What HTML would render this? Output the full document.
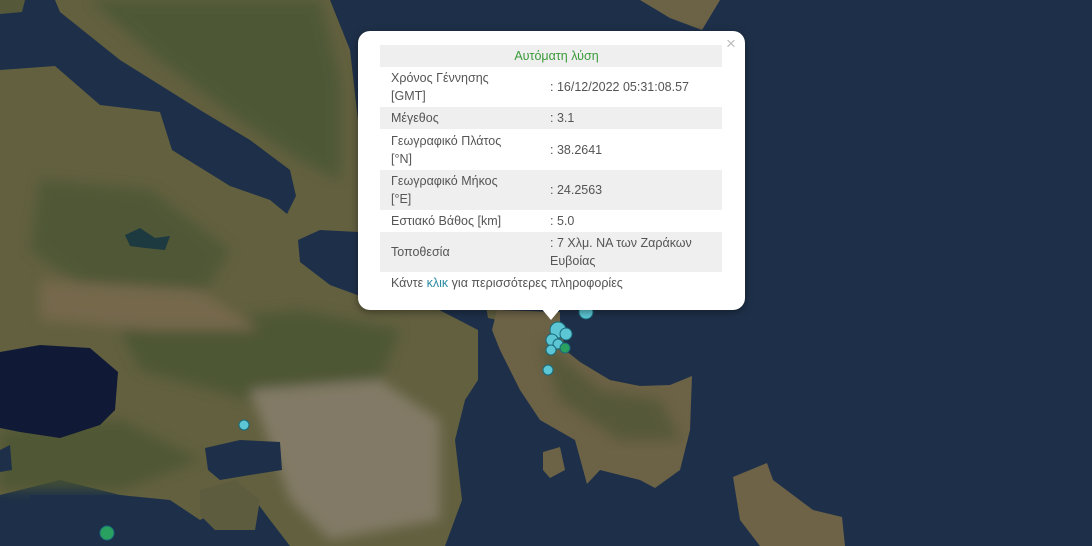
<!DOCTYPE html>
<html><head><meta charset="utf-8"><style>
body{margin:0;width:1092px;height:546px;overflow:hidden;background:#1e3049;font-family:"Liberation Sans",sans-serif}
svg{position:absolute;left:0;top:0}
.pop{position:absolute;left:358px;top:31px;width:387px;height:279px;background:#fff;border-radius:12px;box-shadow:0 2px 8px rgba(0,0,0,.4)}
.tip{position:absolute;left:541px;top:308px;width:0;height:0;border-left:10px solid transparent;border-right:10px solid transparent;border-top:12px solid #fff}
.x{position:absolute;left:726px;top:34px;color:#bbb;font-size:17px}
table{position:absolute;left:380px;top:45px;width:342px;border-collapse:collapse;font-size:12.5px;color:#555}
td{padding:0 0 0 11px;line-height:18px}
tr.g td{background:#efefef}
.h td{text-align:center;color:#3a9a3a;height:22px;background:#efefef}
.lnk{position:absolute;left:391px;top:276px;font-size:12.5px;color:#555}
.lnk span{color:#2a8aa0}
</style></head><body>
<svg width="1092" height="546">
<defs><filter id="b"><feGaussianBlur stdDeviation="6"/></filter></defs>
<rect width="1092" height="546" fill="#1e3049"/>
<path d="M0,0 L25,0 L22,12 L0,14Z" fill="#56583a"/>
<path d="M55,0 L330,0 L350,50 L358,120 L358,232 L320,230 L298,240 L300,262 L330,285 L360,296 L420,300 L478,330 L478,380 L465,400 L455,440 L462,500 L445,546 L290,546 L270,520 L255,500 L230,505 L200,520 L170,500 L120,495 L60,480 L20,490 L0,495 L0,70 L55,66 L100,105 L160,112 L172,150 L230,186 L270,200 L287,214 L296,196 L290,170 L250,140 L200,110 L120,60 L60,12Z" fill="#62603f"/>
<g filter="url(#b)" opacity=".8">
<path d="M90,0 L320,0 L340,80 L340,180 L300,160 L240,120 L160,60Z" fill="#4a5634"/>
<path d="M40,180 L150,190 L230,250 L200,300 L90,290 L30,250Z" fill="#4c5634"/>
<path d="M120,330 L300,310 L400,330 L380,380 L250,400 L140,370Z" fill="#4a5432"/>
<path d="M0,430 L120,420 L200,460 L120,490 L0,490Z" fill="#4b5533"/>
<path d="M250,390 L380,380 L440,420 L440,520 L330,540 L290,500Z" fill="#8a8170"/>
<path d="M40,280 L200,290 L260,330 L150,330 L40,320Z" fill="#7a6b50"/>
</g>
<path d="M0,352 L40,345 L90,348 L118,372 L115,410 L100,425 L60,438 L20,432 L0,428Z" fill="#101a36"/>
<path d="M125,235 L140,228 L155,238 L170,236 L165,250 L145,248 L130,246Z" fill="#1d3a40"/>
<path d="M205,448 L240,440 L280,442 L282,470 L250,475 L220,480 L208,470Z" fill="#1e3049"/>
<path d="M0,450 L10,445 L12,470 L0,472Z" fill="#1e3049"/>
<path d="M30,495 L120,495 L170,510 L200,525 L225,510 L255,505 L285,546 L30,546Z" fill="#1e3049"/>
<path d="M200,490 L235,480 L260,500 L255,530 L215,530 L200,515Z" fill="#5e5c3e"/>
<path d="M485,300 L500,300 L497,320 L488,318Z" fill="#5e5c3e"/>
<path d="M497,310 L560,312 L560,320 L565,350 L580,362 L610,380 L640,386 L670,385 L692,376 L690,430 L680,470 L655,488 L640,480 L600,470 L587,484 L575,440 L540,420 L520,390 L500,350 L492,330Z" fill="#6c6246"/>
<path d="M540,340 L600,390 L660,400 L680,440 L620,440 L560,400Z" fill="#4e5534" filter="url(#b)" opacity=".7"/>
<path d="M543,452 L560,447 L565,470 L550,478 L543,470Z" fill="#6c6246"/>
<path d="M733,477 L767,463 L773,480 L813,510 L842,517 L845,546 L760,546 L740,520Z" fill="#6e6247"/>
<path d="M640,0 L720,0 L702,30 L670,18Z" fill="#6c6246"/>
<g stroke="#1a6a7a" stroke-width="1">
<circle cx="586" cy="312" r="7" fill="#5cc6d4"/>
<circle cx="558" cy="330" r="8" fill="#5cc6d4"/>
<circle cx="566" cy="334" r="6" fill="#5cc6d4"/>
<circle cx="552" cy="340" r="6" fill="#5cc6d4"/>
<circle cx="558" cy="344" r="5" fill="#5cc6d4"/>
<circle cx="551" cy="350" r="5" fill="#5cc6d4"/>
<circle cx="565" cy="348" r="5" fill="#2aa060"/>
<circle cx="548" cy="370" r="5" fill="#5cc6d4"/>
<circle cx="244" cy="425" r="5" fill="#5cc6d4"/>
<circle cx="107" cy="533" r="7" fill="#2aa060"/>
</g>
</svg>
<div class="pop"></div><div class="tip"></div>
<div class="x">×</div>
<table>
<tr class="h"><td colspan="2">Αυτόματη λύση</td></tr>
<tr style="height:40px"><td style="width:148px">Χρόνος Γέννησης<br>[GMT]</td><td>: 16/12/2022 05:31:08.57</td></tr>
<tr class="g" style="height:22px"><td>Μέγεθος</td><td>: 3.1</td></tr>
<tr style="height:41px"><td>Γεωγραφικό Πλάτος<br>[°N]</td><td>: 38.2641</td></tr>
<tr class="g" style="height:40px"><td>Γεωγραφικό Μήκος<br>[°E]</td><td>: 24.2563</td></tr>
<tr style="height:22px"><td>Εστιακό Βάθος [km]</td><td>: 5.0</td></tr>
<tr class="g" style="height:40px"><td>Τοποθεσία</td><td>: 7 Χλμ. ΝΑ των Ζαράκων<br>Ευβοίας</td></tr>
</table>
<div class="lnk">Κάντε <span>κλικ</span> για περισσότερες πληροφορίες</div>
</body></html>
